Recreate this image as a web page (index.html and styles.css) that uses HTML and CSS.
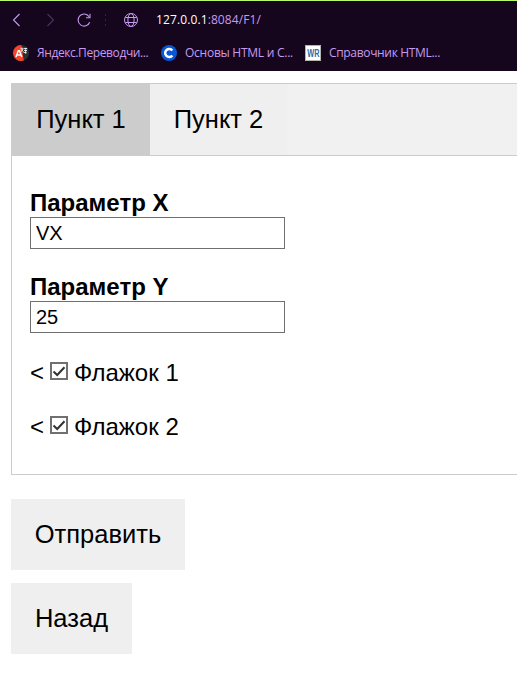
FILE: index.html
```html
<!DOCTYPE html>
<html lang="ru">
<head>
<meta charset="utf-8">
<title>F1</title>
<link rel="stylesheet" href="styles.css">
</head>
<body>
<header class="browser">
  <div class="toolbar">
    <svg class="nav back" viewBox="0 0 16 16"><path d="M11.5 2 5.5 8l6 6"/></svg>
    <svg class="nav forward" viewBox="0 0 16 16"><path d="M5.5 2l6 6-6 6"/></svg>
    <svg class="nav reload" viewBox="0 0 16 16"><path d="M13.7 10.2A6 6 0 1 1 13 4.6M14 1.8v4h-4"/></svg>
    <span class="dots"><i></i><i></i><i></i></span>
    <svg class="nav globe" viewBox="0 0 16 16"><circle cx="8" cy="8" r="6.5"/><ellipse cx="8" cy="8" rx="3.1" ry="6.5"/><path d="M2.3 5.5h11.4M2.3 10.5h11.4"/></svg>
    <span class="url"><b>127.0.0.1</b>:8084/F1/</span>
  </div>
  <nav class="bookmarks">
    <a class="bookmark first">
      <svg viewBox="0 0 16 16"><circle cx="8" cy="8" r="8" fill="#2d3032"/><path d="M8.3 0A8 8 0 1 0 10.8 15.5z" fill="#f8432b"/><path d="M3 12 5.3 5.8h1.2L8.8 12M4 10h4" fill="none" stroke="#fff" stroke-width="1.5"/><path d="M7.5 3.7h3M9 2.5v1.2M8 6.8l2.2-3M8.2 4.4l2.2 2.4M11 3.5h3.2M12.7 2.8v6M11 5.5h3M10.5 7.5h3" fill="none" stroke="#eee" stroke-width=".9"/></svg>
      <span>Яндекс.Переводчи...</span>
    </a>
    <a class="bookmark second">
      <svg viewBox="0 0 16 16"><circle cx="8" cy="8" r="8" fill="#0757d8"/><path d="M11.3 5.5A4 4 0 1 0 11.3 10.5" fill="none" stroke="#fff" stroke-width="2.5"/></svg>
      <span>Основы HTML и С...</span>
    </a>
    <a class="bookmark third">
      <i class="wr"><b>WR</b></i>
      <span>Справочник HTML...</span>
    </a>
  </nav>
</header>
<main>
  <div class="tabs">
    <button class="tab active">Пункт 1</button>
    <button class="tab">Пункт 2</button>
  </div>
  <section class="panel">
    <label class="field"><b>Параметр X</b><input type="text" value="VX"></label>
    <label class="field"><b>Параметр Y</b><input type="text" value="25"></label>
    <label class="check">&lt; <svg viewBox="0 0 18 18"><rect x="1" y="1" width="16" height="16"/><path d="M3.5 9.5 7.2 13 14.5 5.2"/></svg><span>Флажок 1</span></label>
    <label class="check">&lt; <svg viewBox="0 0 18 18"><rect x="1" y="1" width="16" height="16"/><path d="M3.5 9.5 7.2 13 14.5 5.2"/></svg><span>Флажок 2</span></label>
  </section>
  <div class="actions">
    <button class="submit">Отправить</button>
    <button class="return">Назад</button>
  </div>
</main>
</body>
</html>
```
FILE: styles.css
```css
* { box-sizing: border-box; }
body {
  margin: 0;
  background: #fff;
  color: #000;
  font-family: "Liberation Sans", Arial, sans-serif;
}
.browser {
  height: 71px;
  border-top: 1px solid #b9f868;
  background: #15061e;
  color: #c79af0;
  font: 12px/16px "Open Sans", "Noto Sans", sans-serif;
}
.toolbar {
  display: flex;
  align-items: center;
  height: 38px;
  padding-left: 8px;
}
.nav {
  flex: none;
  width: 16px;
  height: 16px;
  fill: none;
  stroke: #c79af0;
  stroke-width: 1.1;
}
.forward { margin-left: 18px; stroke: #4b3359; }
.reload { margin-left: 18px; }
.dots {
  display: flex;
  flex-direction: column;
  gap: 3px;
  margin: 0 17px 0 13px;
}
.dots i { width: 1px; height: 2px; background: #3a2049; }
.globe { stroke-width: 1; }
.url { margin-left: 17px; white-space: nowrap; letter-spacing: 0.11px; }
.url b { font-weight: 400; color: #fff; }
.bookmarks {
  display: flex;
  height: 28px;
  padding-left: 13px;
}
.bookmark {
  display: flex;
  align-items: center;
  gap: 8px;
  white-space: nowrap;
}
.bookmark svg { flex: none; width: 16px; height: 16px; }
.first { width: 148px; letter-spacing: -0.4px; }
.second { width: 144px; letter-spacing: -0.25px; }
.third { letter-spacing: -0.33px; }
.wr {
  display: flex;
  justify-content: center;
  width: 16px;
  height: 16px;
  border: 1px solid #b7b4ae;
  background: #fff;
  color: #326aa4;
  font: bold 10px/15px "Liberation Sans", sans-serif;
  letter-spacing: 0;
}
.wr b { transform: scaleX(0.73); }
main { padding: 12px 0 0 11px; }
button {
  border: 0;
  background: #efefef;
  color: #000;
  font: 25.5px/29px "Liberation Sans", Arial, sans-serif;
}
.tabs {
  display: flex;
  height: 73px;
  border: 1px solid #ccc;
  border-right: 0;
  background: #f1f1f1;
}
.tab { width: 137px; padding: 0 0 1px; }
.tab.active { width: 138px; background: #ccc; }
.panel {
  height: 319px;
  padding: 33px 18px 0;
  border: 1px solid #ccc;
  border-top: 0;
  border-right: 0;
  font-size: 24px;
  line-height: 28px;
}
.field { display: block; height: 84px; }
.field b { display: block; }
input {
  display: block;
  width: 255px;
  height: 32px;
  padding: 1px 5px;
  border: 1px solid #707070;
  background: #fff;
  color: #000;
  font: 20px "Liberation Sans", Arial, sans-serif;
}
.check {
  display: flex;
  align-items: center;
  height: 28px;
  margin: 2px 0 26px;
}
.check + .check { margin-top: 0; }
.check svg {
  width: 18px;
  height: 18px;
  margin: -4px 6px 0;
  fill: #fff;
  stroke: #707070;
  stroke-width: 2;
}
.check path { fill: none; stroke: #333; }
.actions {
  display: flex;
  flex-direction: column;
  align-items: flex-start;
  gap: 13px;
  margin-top: 24px;
}
.actions button { height: 71px; padding: 0; }
.submit { width: 174px; }
.return { width: 121px; }
```
